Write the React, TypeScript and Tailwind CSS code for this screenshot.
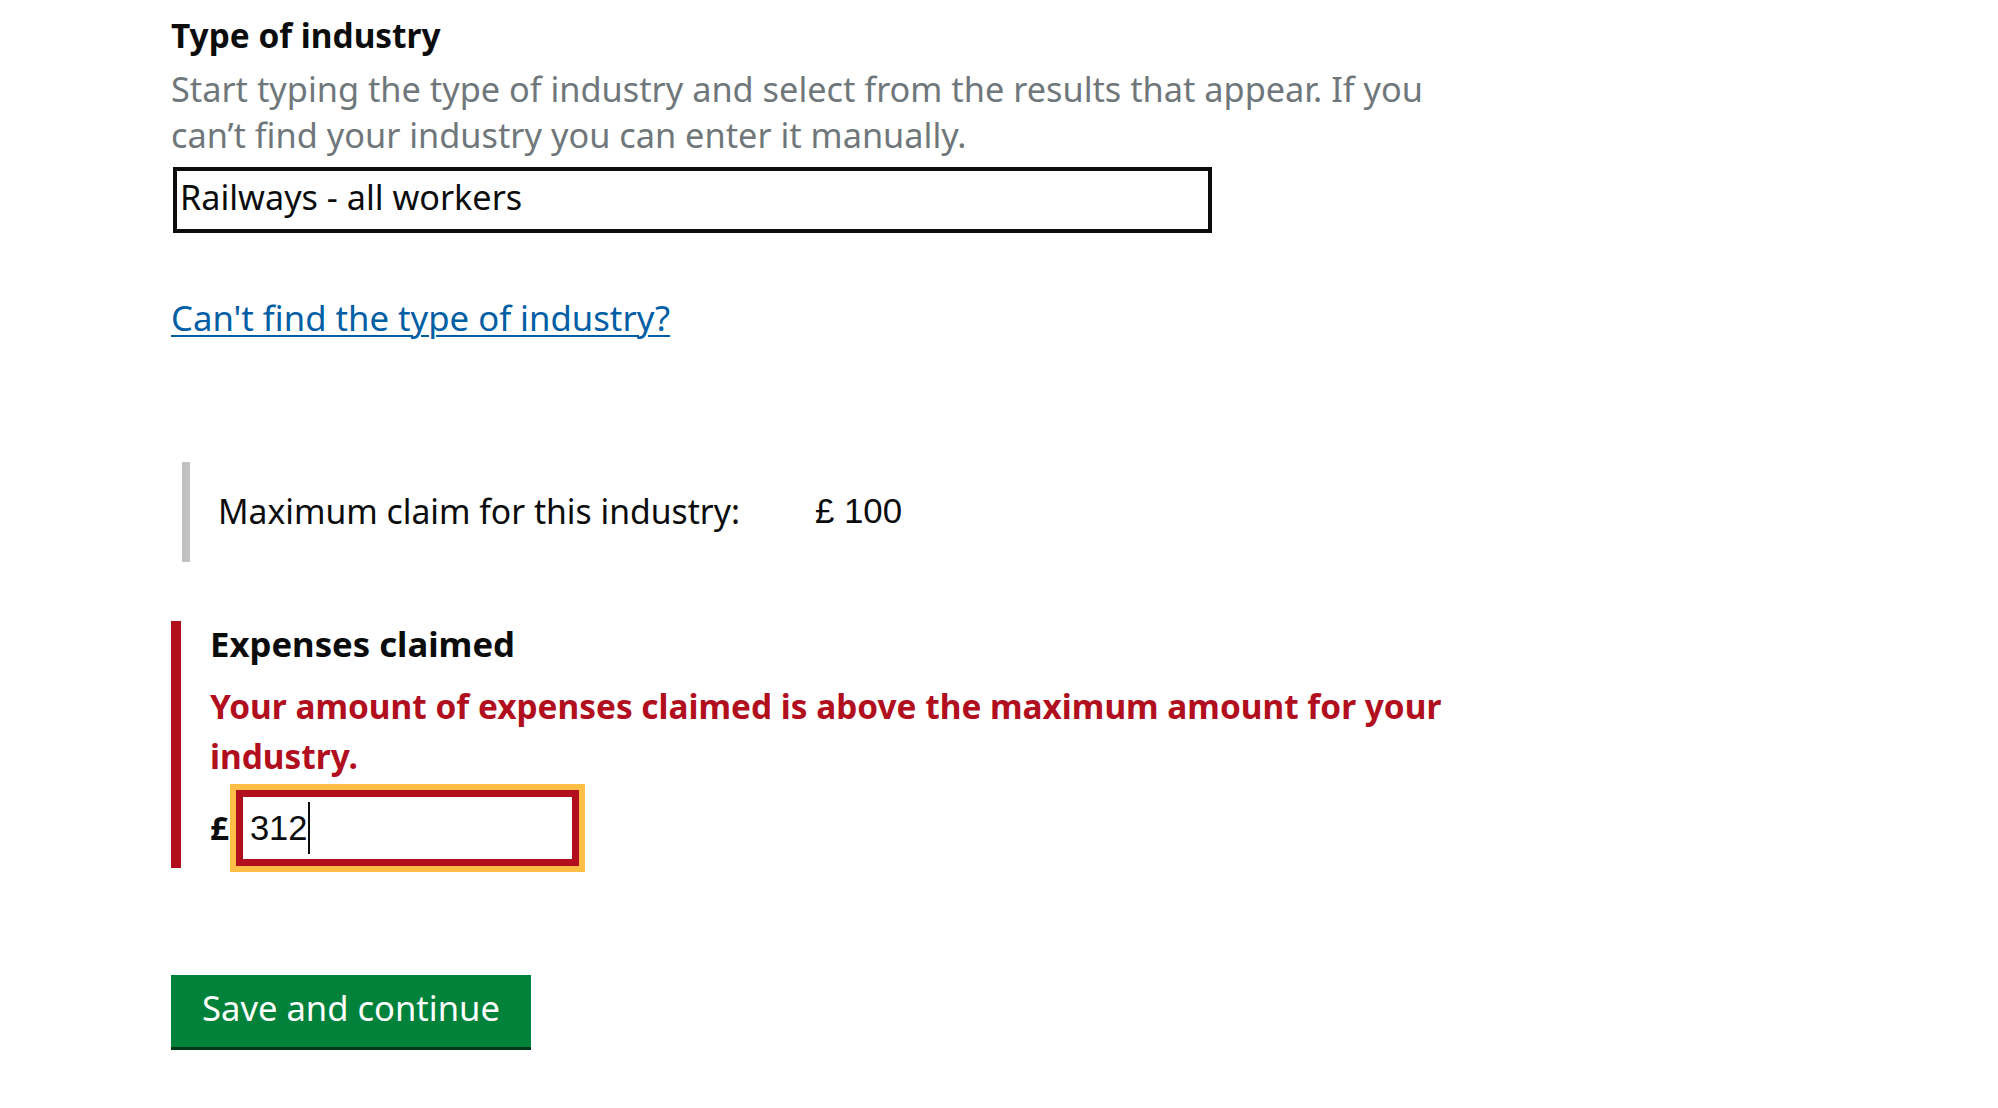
import React from "react";

export default function App() {
  return (
    <div className="min-h-screen bg-white font-['Noto_Sans',sans-serif] text-[#0b0c0c]">
      <div className="w-[1300px] pl-[171px] pt-[12px] box-content">
        <label className="block text-[33.4px] leading-[46px] font-bold">Type of industry</label>
        <p className="mt-[8px] text-[34.3px] leading-[46px] text-[#6f777b]">
          Start typing the type of industry and select from the results that appear. If you can’t find your industry you can enter it manually.
        </p>
        <input
          readOnly
          value="Railways - all workers"
          className="mt-[9px] ml-[2px] block w-[1039px] h-[66px] border-4 border-[#0b0c0c] pl-[3px] pb-[8px] text-[34.2px] text-[#0b0c0c] font-['Noto_Sans',sans-serif] outline-none"
        />
        <div className="mt-[62px] leading-[46px]">
          <a href="#" className="text-[34.7px] text-[#005ea5] underline decoration-[2px] underline-offset-[4px]">
            Can't find the type of industry?
          </a>
        </div>

        <div className="mt-[114px] ml-[11px] flex border-l-[8px] border-[#bfc1c3] pl-[28px] pt-[26px] pb-[28px]">
          <span className="w-[597px] text-[33.7px] leading-[46px]">Maximum claim for this industry:</span>
          <span className="font-['Liberation_Sans',Arial,sans-serif] text-[34.8px] leading-[46px]">£ 100</span>
        </div>

        <div className="mt-[59px] border-l-[10px] border-[#b10e1e] pl-[29px] pb-[2px]">
          <label className="block text-[34.7px] leading-[46px] font-bold">Expenses claimed</label>
          <p className="mt-[14px] text-[33.4px] leading-[50px] font-bold text-[#b10e1e]">
            Your amount of expenses claimed is above the maximum amount for your industry.
          </p>
          <div className="mt-[9px] flex items-center">
            <span className="text-[33px] leading-[46px] font-bold">£</span>
            <div className="ml-[7px] flex h-[76px] w-[343px] items-center border-[7px] border-[#b10e1e] bg-white pl-[7px] shadow-[0_0_0_6px_#ffbf47]">
              <span className="font-['Liberation_Sans',Arial,sans-serif] text-[34.5px] leading-[46px] text-[#0b0c0c]">312</span>
              <span className="ml-[1px] inline-block h-[52px] w-[2px] bg-[#0b0c0c]" />
            </div>
          </div>
        </div>

        <button
          type="button"
          className="mt-[107px] flex h-[72px] w-[360px] items-start justify-center bg-[#00823b] pt-[10px] text-[34.6px] leading-[46px] text-white shadow-[0_3px_0_#003618]"
        >
          Save and continue
        </button>
      </div>
    </div>
  );
}
